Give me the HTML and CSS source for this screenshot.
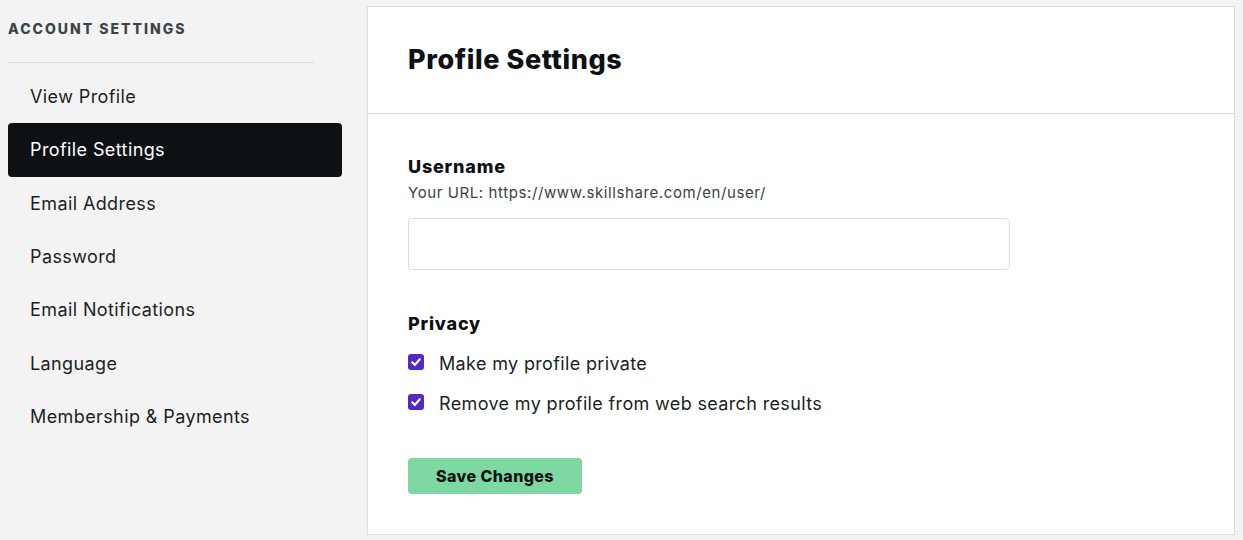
FILE: index.html
```html
<!DOCTYPE html>
<html lang="en">
<head>
<meta charset="utf-8">
<title>Profile Settings</title>
<link rel="stylesheet" href="styles.css">
</head>
<body>
<div class="page">
  <aside class="sidebar">
    <h2 class="side-title">ACCOUNT SETTINGS</h2>
    <nav class="side-nav">
      <a class="nav-item" href="#">View Profile</a>
      <a class="nav-item active" href="#">Profile Settings</a>
      <a class="nav-item" href="#">Email Address</a>
      <a class="nav-item" href="#">Password</a>
      <a class="nav-item" href="#">Email Notifications</a>
      <a class="nav-item" href="#">Language</a>
      <a class="nav-item" href="#">Membership &amp; Payments</a>
    </nav>
  </aside>
  <main class="card">
    <header class="card-head">
      <h1 class="card-title">Profile Settings</h1>
    </header>
    <section class="card-body">
      <div class="field-label">Username</div>
      <div class="field-hint">Your URL: https://www.skillshare.com/en/user/</div>
      <input class="text-input" type="text">
      <div class="field-label privacy">Privacy</div>
      <label class="check-row">
        <span class="box"><svg viewBox="0 0 16 16" width="16" height="16"><path d="M4.2 8.3 L6.9 10.9 L11.8 5.3" fill="none" stroke="#fff" stroke-width="2.2" stroke-linecap="round" stroke-linejoin="round"/></svg></span>
        <span class="check-text">Make my profile private</span>
      </label>
      <label class="check-row">
        <span class="box"><svg viewBox="0 0 16 16" width="16" height="16"><path d="M4.2 8.3 L6.9 10.9 L11.8 5.3" fill="none" stroke="#fff" stroke-width="2.2" stroke-linecap="round" stroke-linejoin="round"/></svg></span>
        <span class="check-text">Remove my profile from web search results</span>
      </label>
      <button class="save-btn" type="button">Save Changes</button>
    </section>
  </main>
</div>
</body>
</html>
```
FILE: styles.css
```css
* { box-sizing: border-box; }
html, body { margin: 0; padding: 0; }
body {
  background: #f3f3f3;
  font-family: Inter, "Noto Sans", sans-serif;
  color: #0e1114;
  height: 540px;
  overflow: hidden;
}
.page {
  display: flex;
  align-items: flex-start;
  gap: 25px;
  padding: 6px 0 0 8px;
}
.sidebar {
  width: 334px;
  flex: none;
}
.side-title {
  margin: 0;
  font-size: 14px;
  font-weight: 800;
  letter-spacing: 2px;
  color: #3b4447;
  line-height: 20px;
  padding-top: 13px;
  width: 306px;
  padding-bottom: 23px;
  border-bottom: 1px solid #dcdcdc;
}
.side-nav {
  display: flex;
  flex-direction: column;
  padding-top: 7px;
}
.nav-item {
  display: flex;
  align-items: center;
  height: 53.3px;
  padding-left: 22px;
  font-size: 18px;
  color: #1b1f23;
  text-decoration: none;
  border-radius: 4px;
  letter-spacing: 0.4px;
}
.nav-item.active {
  background: #0e1114;
  color: #fff;
}
.card {
  width: 868px;
  height: 529px;
  background: #fff;
  border: 1px solid #dcdcdc;
}
.card-head {
  height: 107px;
  display: flex;
  align-items: center;
  padding-left: 40px;
  border-bottom: 1px solid #dcdcdc;
}
.card-title {
  margin: 0;
  font-size: 27px;
  font-weight: 800;
  letter-spacing: 0.6px;
  line-height: 34px;
}
.card-body {
  padding: 41px 0 0 40px;
  display: flex;
  flex-direction: column;
  align-items: flex-start;
}
.field-label {
  font-size: 18px;
  font-weight: 800;
  line-height: 24px;
  letter-spacing: 0.8px;
}
.field-hint {
  margin-top: 4px;
  font-size: 15px;
  line-height: 20px;
  color: #3a4145;
  letter-spacing: 0.6px;
}
.text-input {
  margin-top: 15px;
  width: 602px;
  height: 52px;
  border: 1px solid #dcdcdc;
  border-radius: 4px;
  background: #fff;
  font: inherit;
}
.privacy { margin-top: 42px; }
.check-row {
  display: flex;
  align-items: center;
  gap: 15px;
  margin-top: 16px;
  height: 24px;
}
.check-row + .check-row { margin-top: 16px; }
.box {
  width: 16px;
  height: 16px;
  border-radius: 3px;
  background: #5428c4;
  display: flex;
  margin-top: -4px;
}
.check-text {
  font-size: 18px;
  color: #1b1f23;
  line-height: 24px;
  letter-spacing: 0.35px;
}
.save-btn {
  margin-top: 42px;
  width: 174px;
  height: 36px;
  border: none;
  border-radius: 4px;
  background: #7dd8a2;
  font-family: inherit;
  font-size: 16px;
  font-weight: 800;
  letter-spacing: 0.4px;
  color: #0e1114;
}
```
